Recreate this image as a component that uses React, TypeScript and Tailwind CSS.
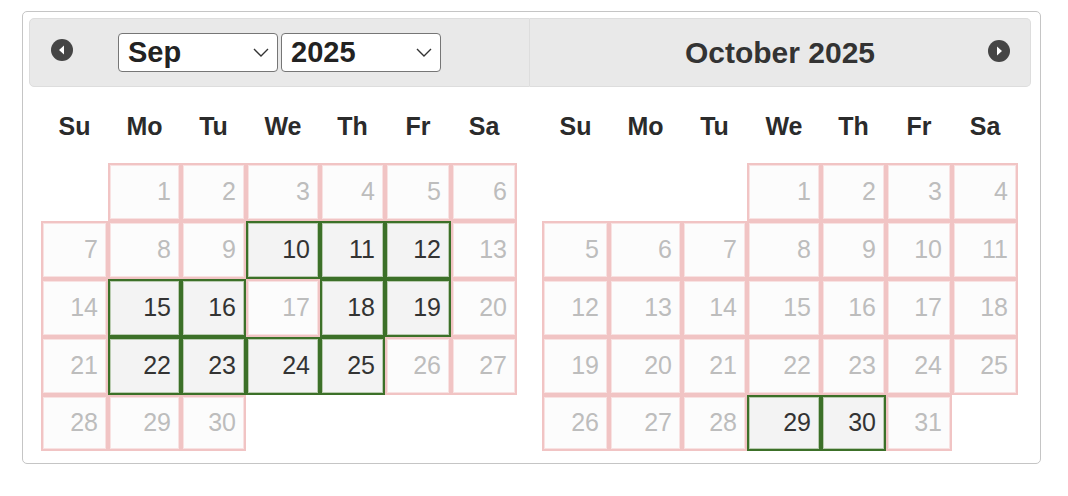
import React from 'react';

type Day = { n: number; on?: boolean } | null;

const COLS = 'grid grid-cols-[67px_73px_65px_74px_65px_66px_66px]';
const NAMES = ['Su', 'Mo', 'Tu', 'We', 'Th', 'Fr', 'Sa'];

function buildMonth(offset: number, total: number, picked: number[]): Day[] {
  const out: Day[] = [];
  for (let i = 0; i < offset; i++) out.push(null);
  for (let d = 1; d <= total; d++) out.push({ n: d, on: picked.includes(d) });
  return out;
}

const september = buildMonth(1, 30, [10, 11, 12, 15, 16, 18, 19, 22, 23, 24, 25]);
const october = buildMonth(3, 31, [29, 30]);

function NavIcon({ dir }: { dir: 'prev' | 'next' }) {
  return (
    <svg width="22" height="22" viewBox="0 0 22 22">
      <circle cx="11" cy="11" r="11" fill="#454545" />
      {dir === 'prev' ? (
        <path d="M8 11 L13 6.5 L13 15.5 Z" fill="#fff" />
      ) : (
        <path d="M14 11 L9 6.5 L9 15.5 Z" fill="#fff" />
      )}
    </svg>
  );
}

function FakeSelect({ label }: { label: string }) {
  return (
    <div className="flex h-[39px] w-[160px] items-center justify-between rounded-[4px] border border-[#767676] bg-white pl-[9px] pr-[8px]">
      <span className="text-[29px] font-bold leading-none text-[#222]">{label}</span>
      <svg width="16" height="9" viewBox="0 0 16 9">
        <polyline points="1,1 8,8 15,1" fill="none" stroke="#333" strokeWidth="1.4" />
      </svg>
    </div>
  );
}

function Cell({ day, last }: { day: Day; last: boolean }) {
  const h = last ? 'h-[56px]' : 'h-[58px]';
  if (!day) return <div className={h} />;
  return (
    <div
      className={`${h} border-2 ${
        day.on ? 'border-[#3c7028] bg-[#f3f3f3]' : 'border-[#f1c4c4] bg-[#fcfcfc]'
      }`}
    >
      <div
        className={`flex h-full items-center justify-end border pr-[7px] text-[25px] ${
          day.on ? 'border-[#b9cbb0] text-[#333]' : 'border-[#f8e2e2] text-[#bdbdbd]'
        }`}
      >
        {day.n}
      </div>
    </div>
  );
}

function MonthGrid({ days }: { days: Day[] }) {
  return (
    <div className="pl-[12px]">
      <div className={`${COLS} h-[76px] items-center pt-[3px]`}>
        {NAMES.map((n) => (
          <div key={n} className="text-center text-[25px] font-bold text-[#2b2b2b]">
            {n}
          </div>
        ))}
      </div>
      <div className={COLS}>
        {days.map((d, i) => (
          <Cell key={i} day={d} last={i >= 28} />
        ))}
      </div>
    </div>
  );
}

export default function App() {
  return (
    <div className="h-[496px] w-[1068px] bg-white pl-[22px] pt-[11px] font-['Liberation_Sans',Arial,sans-serif]">
      <div className="h-[453px] w-[1019px] rounded-[5px] border border-[#c5c5c5] p-[6px]">
        <div className="flex">
          <div className="w-[501px]">
            <div className="flex h-[69px] items-center rounded-l-[5px] border border-[#dddddd] bg-[#e9e9e9]">
              <div className="ml-[21px] mb-[5px]">
                <NavIcon dir="prev" />
              </div>
              <div className="ml-[45px] flex gap-[3px]">
                <FakeSelect label="Sep" />
                <FakeSelect label="2025" />
              </div>
            </div>
            <MonthGrid days={september} />
          </div>
          <div className="w-[501px]">
            <div className="flex h-[69px] items-center rounded-r-[5px] border border-l-0 border-[#dddddd] bg-[#e9e9e9]">
              <div className="flex-1 pl-[42px] text-center text-[30px] font-bold text-[#333]">
                October 2025
              </div>
              <div className="mr-[20px] mb-[4px]">
                <NavIcon dir="next" />
              </div>
            </div>
            <MonthGrid days={october} />
          </div>
        </div>
      </div>
    </div>
  );
}
